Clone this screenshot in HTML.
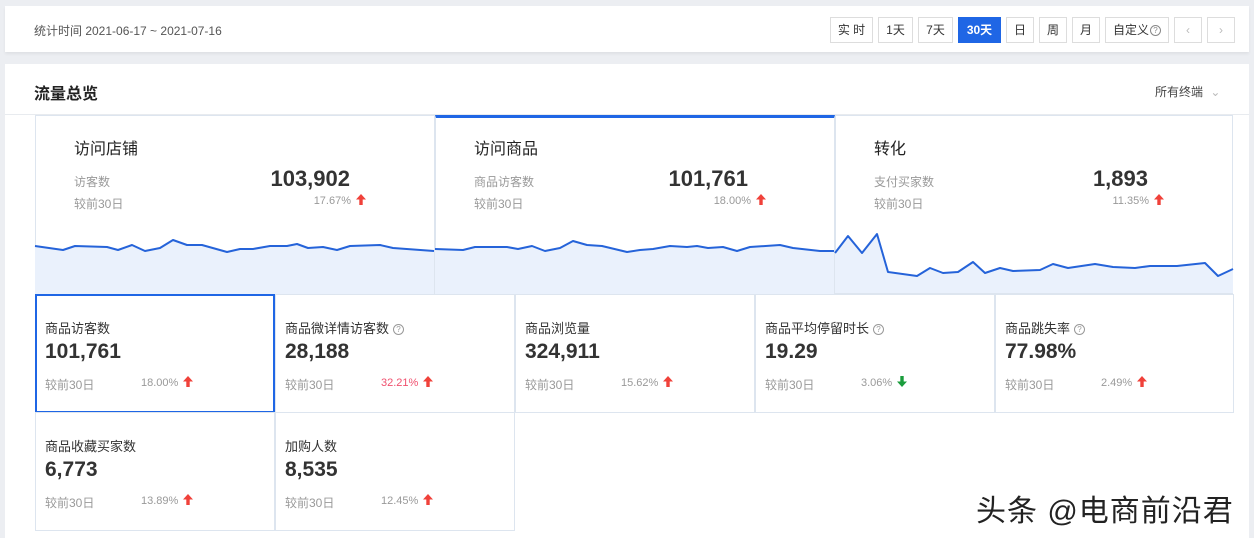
<!DOCTYPE html>
<html><head><meta charset="utf-8"><style>
*{margin:0;padding:0;box-sizing:border-box}
body{width:1254px;height:538px;background:#eceef2;font-family:"Liberation Sans","Noto Sans CJK SC",sans-serif;color:#333;position:relative;overflow:hidden}
.card{position:absolute;background:#fff;left:5px;width:1244px}
.top{top:6px;height:46px;box-shadow:0 2px 3px rgba(0,0,0,.06)}
.abs{position:absolute}
.btn{position:absolute;top:17px;height:26px;border:1px solid #ddd;font-size:12px;line-height:24px;text-align:center;color:#333;background:#fff}
.btn.on{background:#1f66e5;border-color:#1f66e5;color:#fff;font-weight:bold}
.main{top:64px;height:474px}
.panel{position:absolute;top:115px;height:179px;border:1px solid #dde5ef;background:#fff;overflow:hidden}
.pt{position:absolute;left:38px;top:19px;font-size:16px;color:#222}
.pl{position:absolute;left:38px;font-size:12px;color:#999}
.pv{position:absolute;right:84px;top:50px;font-size:22px;font-weight:bold;color:#333}
.pp{position:absolute;right:68px;top:78px;font-size:11px;color:#999}
.up{display:inline-block;width:10px;height:11px;vertical-align:-1px;margin-left:5px}
.cell{position:absolute;width:240px;height:119px;border:1px solid #dde5ef;background:#fff}
.cl{position:absolute;left:9px;top:23px;font-size:13px;color:#333}
.cv{position:absolute;left:9px;top:45px;font-size:21px;font-weight:bold;color:#333}
.cc{position:absolute;left:9px;top:81px;font-size:12px;color:#999}
.cp{position:absolute;left:105px;top:81px;font-size:11px;color:#999}
.q{display:inline-block;width:11px;height:11px;border:1px solid #999;border-radius:50%;font-size:8px;line-height:9px;text-align:center;color:#999;vertical-align:1px;margin-left:4px}
</style></head><body>
<svg width="0" height="0" style="position:absolute"><defs>
<symbol id="u" viewBox="0 0 10 11"><path d="M5 0L10 5.5H6.7V11H3.3V5.5H0Z" fill="#f0413a"/></symbol>
<symbol id="d" viewBox="0 0 10 11"><path d="M5 11L10 5.5H6.7V0H3.3V5.5H0Z" fill="#1a9c3c"/></symbol>
</defs></svg>
<div class="card top">
<div class="abs" style="left:29px;top:16px;font-size:12px;color:#555">统计时间 2021-06-17 ~ 2021-07-16</div>
</div>
<div class="btn" style="left:830px;width:43px">实 时</div>
<div class="btn" style="left:878px;width:35px">1天</div>
<div class="btn" style="left:918px;width:35px">7天</div>
<div class="btn on" style="left:958px;width:43px">30天</div>
<div class="btn" style="left:1006px;width:28px">日</div>
<div class="btn" style="left:1039px;width:28px">周</div>
<div class="btn" style="left:1072px;width:28px">月</div>
<div class="btn" style="left:1105px;width:64px">自定义<span class="q" style="margin-left:1px;border-color:#888;color:#888">?</span></div>
<div class="btn" style="left:1174px;width:28px;color:#bbb">&#8249;</div>
<div class="btn" style="left:1207px;width:28px;color:#bbb">&#8250;</div>
<div class="card main">
<div class="abs" style="left:29px;top:16px;font-size:16px;font-weight:bold;color:#222">流量总览</div>
<div class="abs" style="left:1150px;top:19px;font-size:12px;color:#444">所有终端 <span style="color:#bbb;margin-left:4px">&#8964;</span></div>
<div class="abs" style="left:0;top:50px;width:1244px;height:1px;background:#e8ebef"></div>
</div>

<div class="panel" style="left:35px;width:400px">
<div class="pt">访问店铺</div><div class="pl" style="top:57px">访客数</div><div class="pl" style="top:79px">较前30日</div>
<div class="pv">103,902</div><div class="pp">17.67%<svg class="up"><use href="#u"/></svg></div>
</div>
<div class="panel" style="left:435px;width:400px;border-top:3px solid #1f66e5">
<div class="pt" style="top:17px">访问商品</div><div class="pl" style="top:55px">商品访客数</div><div class="pl" style="top:77px">较前30日</div>
<div class="pv" style="top:48px;right:86px">101,761</div><div class="pp" style="top:76px">18.00%<svg class="up"><use href="#u"/></svg></div>
</div>
<div class="panel" style="left:835px;width:398px">
<div class="pt">转化</div><div class="pl" style="top:57px">支付买家数</div><div class="pl" style="top:79px">较前30日</div>
<div class="pv">1,893</div><div class="pp">11.35%<svg class="up"><use href="#u"/></svg></div>
</div>
<svg class="abs" style="left:0;top:0" width="1254" height="300">
<g transform="translate(35,0)">
<path d="M0 246L28 250L40 246L72 247L83 250L97 245L110 251L125 248L138 240L152 245L167 245L192 252L205 249L218 249L235 246L252 246L262 244L273 248L288 247L302 250L315 246L345 245L358 248L399 251L399 294L0 294Z" fill="#eaf1fc"/>
<path d="M0 246L28 250L40 246L72 247L83 250L97 245L110 251L125 248L138 240L152 245L167 245L192 252L205 249L218 249L235 246L252 246L262 244L273 248L288 247L302 250L315 246L345 245L358 248L399 251" fill="none" stroke="#2563d9" stroke-width="2" stroke-linejoin="round"/>
</g>
<g transform="translate(435,0)">
<path d="M0 249L28 250L40 247L72 247L83 249L97 246L110 251L125 248L138 241L152 245L167 246L192 252L205 250L218 249L235 246L252 247L262 246L273 248L288 247L302 251L315 247L345 245L358 248L385 251L399 251L399 294L0 294Z" fill="#eaf1fc"/>
<path d="M0 249L28 250L40 247L72 247L83 249L97 246L110 251L125 248L138 241L152 245L167 246L192 252L205 250L218 249L235 246L252 247L262 246L273 248L288 247L302 251L315 247L345 245L358 248L385 251L399 251" fill="none" stroke="#2563d9" stroke-width="2" stroke-linejoin="round"/>
</g>
<path d="M835 253L848 236L862 253L877 234L888 272L917 276L930 268L943 273L958 272L973 262L985 273L1000 268L1013 271L1040 270L1053 264L1068 268L1095 264L1113 267L1135 268L1150 266L1177 266L1205 263L1218 276L1233 269L1233 293L835 293Z" fill="#eaf1fc"/>
<path d="M835 253L848 236L862 253L877 234L888 272L917 276L930 268L943 273L958 272L973 262L985 273L1000 268L1013 271L1040 270L1053 264L1068 268L1095 264L1113 267L1135 268L1150 266L1177 266L1205 263L1218 276L1233 269" fill="none" stroke="#2563d9" stroke-width="2" stroke-linejoin="round"/>
</svg>

<div class="cell" style="left:35px;top:294px;border:2px solid #1f66e5"><div class="cl" style="left:8px;top:22px">商品访客数</div><div class="cv" style="left:8px;top:44px">101,761</div><div class="cc" style="left:8px;top:80px">较前30日</div><div class="cp" style="left:104px;top:80px">18.00%<svg class="up"><use href="#u"/></svg></div></div>
<div class="cell" style="left:275px;top:294px"><div class="cl">商品微详情访客数<span class="q">?</span></div><div class="cv">28,188</div><div class="cc">较前30日</div><div class="cp" style="color:#f0506e">32.21%<svg class="up"><use href="#u"/></svg></div></div>
<div class="cell" style="left:515px;top:294px"><div class="cl">商品浏览量</div><div class="cv">324,911</div><div class="cc">较前30日</div><div class="cp">15.62%<svg class="up"><use href="#u"/></svg></div></div>
<div class="cell" style="left:755px;top:294px"><div class="cl">商品平均停留时长<span class="q">?</span></div><div class="cv">19.29</div><div class="cc">较前30日</div><div class="cp">3.06%<svg class="up"><use href="#d"/></svg></div></div>
<div class="cell" style="left:995px;top:294px;width:239px"><div class="cl">商品跳失率<span class="q">?</span></div><div class="cv">77.98%</div><div class="cc">较前30日</div><div class="cp">2.49%<svg class="up"><use href="#u"/></svg></div></div>
<div class="cell" style="left:35px;top:412px"><div class="cl">商品收藏买家数</div><div class="cv">6,773</div><div class="cc">较前30日</div><div class="cp">13.89%<svg class="up"><use href="#u"/></svg></div></div>
<div class="cell" style="left:275px;top:412px"><div class="cl">加购人数</div><div class="cv">8,535</div><div class="cc">较前30日</div><div class="cp">12.45%<svg class="up"><use href="#u"/></svg></div></div>

<div class="abs" style="left:976px;top:486px;font-size:30px;letter-spacing:1px;color:#222;text-shadow:0 0 2px #fff">头条 @电商前沿君</div>
</body></html>
